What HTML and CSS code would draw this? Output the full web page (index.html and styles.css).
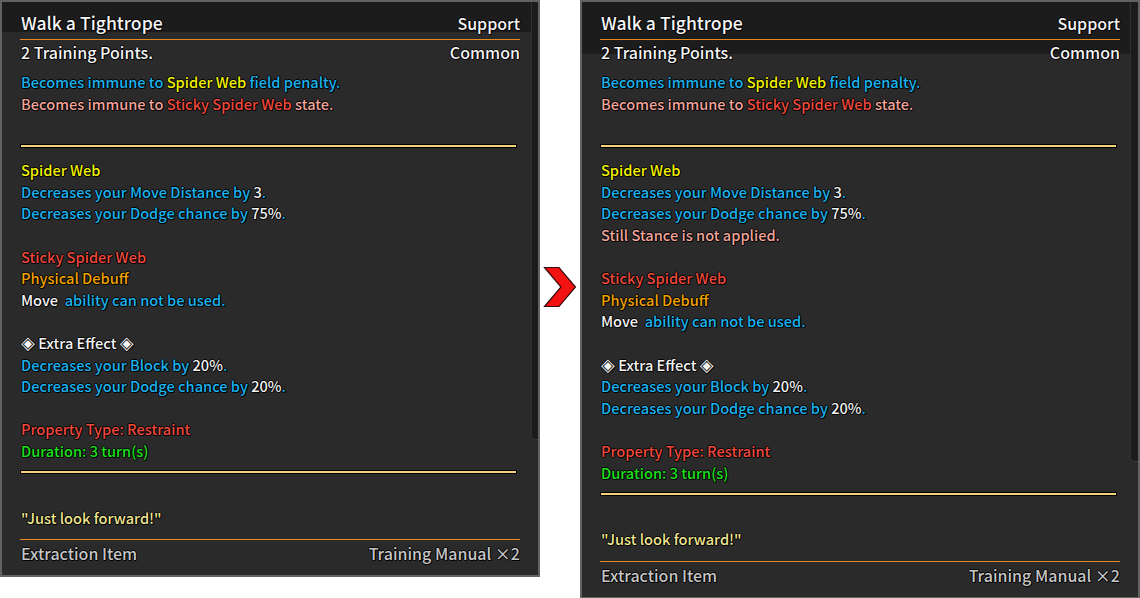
FILE: index.html
```html
<!DOCTYPE html>
<html lang="en">
<head>
    <meta charset="UTF-8">
    <title>Walk a Tightrope</title>
    <link rel="stylesheet" href="styles.css">
</head>
<body>
    <div class="compare">
        <!-- before -->
        <div class="tip tip-old">
            <div class="scroll"></div>
            <div class="head">
                <span class="name">Walk a Tightrope</span>
                <span class="kind">Support</span>
            </div>
            <div class="sub">
                <span>2 Training Points.</span>
                <span>Common</span>
            </div>
            <div class="body">
                <div class="ln blue">Becomes immune to <span class="yellow">Spider Web</span> field penalty.</div>
                <div class="ln pink">Becomes immune to <span class="red">Sticky Spider Web</span> state.</div>
                <div class="ln"></div>
                <div class="rule"></div>
                <div class="ln yellow">Spider Web</div>
                <div class="ln blue">Decreases your Move Distance by <span class="white">3</span>.</div>
                <div class="ln blue">Decreases your Dodge chance by <span class="white">75%</span>.</div>
                <div class="ln"></div>
                <div class="ln red">Sticky Spider Web</div>
                <div class="ln orange">Physical Debuff</div>
                <div class="ln blue"><span class="white">Move</span>&nbsp; ability can not be used.</div>
                <div class="ln"></div>
                <div class="ln white"><span class="dia">◈</span> Extra Effect <span class="dia">◈</span></div>
                <div class="ln blue">Decreases your Block by <span class="white">20%</span>.</div>
                <div class="ln blue">Decreases your Dodge chance by <span class="white">20%</span>.</div>
                <div class="ln"></div>
                <div class="ln red">Property Type: Restraint</div>
                <div class="ln green">Duration: 3 turn(s)</div>
                <div class="rule"></div>
                <div class="ln"></div>
                <div class="ln quote">"Just look forward!"</div>
            </div>
            <div class="foot">
                <span>Extraction Item</span>
                <span>Training Manual ×2</span>
            </div>
        </div>

        <div class="arrow">
            <svg width="34" height="42" viewBox="0 0 34 42">
                <polygon points="1.5,1.5 16,1.5 32.5,21 16,40.5 1.5,40.5 18,21" fill="#f21212" stroke="#3a0a0a" stroke-width="1.2"/>
            </svg>
        </div>

        <!-- after -->
        <div class="tip tip-new">
            <div class="scroll"></div>
            <div class="head">
                <span class="name">Walk a Tightrope</span>
                <span class="kind">Support</span>
            </div>
            <div class="sub">
                <span>2 Training Points.</span>
                <span>Common</span>
            </div>
            <div class="body">
                <div class="ln blue">Becomes immune to <span class="yellow">Spider Web</span> field penalty.</div>
                <div class="ln pink">Becomes immune to <span class="red">Sticky Spider Web</span> state.</div>
                <div class="ln"></div>
                <div class="rule"></div>
                <div class="ln yellow">Spider Web</div>
                <div class="ln blue">Decreases your Move Distance by <span class="white">3</span>.</div>
                <div class="ln blue">Decreases your Dodge chance by <span class="white">75%</span>.</div>
                <div class="ln pink">Still Stance is not applied.</div>
                <div class="ln"></div>
                <div class="ln red">Sticky Spider Web</div>
                <div class="ln orange">Physical Debuff</div>
                <div class="ln blue"><span class="white">Move</span>&nbsp; ability can not be used.</div>
                <div class="ln"></div>
                <div class="ln white"><span class="dia">◈</span> Extra Effect <span class="dia">◈</span></div>
                <div class="ln blue">Decreases your Block by <span class="white">20%</span>.</div>
                <div class="ln blue">Decreases your Dodge chance by <span class="white">20%</span>.</div>
                <div class="ln"></div>
                <div class="ln red">Property Type: Restraint</div>
                <div class="ln green">Duration: 3 turn(s)</div>
                <div class="rule"></div>
                <div class="ln"></div>
                <div class="ln quote">"Just look forward!"</div>
            </div>
            <div class="foot">
                <span>Extraction Item</span>
                <span>Training Manual ×2</span>
            </div>
        </div>
    </div>
</body>
</html>
```

FILE: styles.css
```css
*{
    margin: 0;
    padding: 0;
    box-sizing: border-box;
}
body{
    background: #fff;
    overflow: hidden;
    font-family: "Noto Sans CJK JP", "Noto Sans", sans-serif;
    font-weight: 500;
}
.compare{
    display: flex;
    align-items: flex-start;
}

.tip{
    position: relative;
    border: 2px solid #626262;
    padding: 0 18px;
    background: linear-gradient(#1c1c1c 0 30px, #2a2a2a 30px);
    color: #f4f4f4;
    text-shadow: -1px 0 rgba(0,0,0,.9), 1px 0 rgba(0,0,0,.9), 0 -1px rgba(0,0,0,.9), 0 1px rgba(0,0,0,.9), 1px 1px rgba(0,0,0,.6);
}
.tip-old{
    width: 540px;
}
.tip-new{
    width: 560px;
    background: linear-gradient(#1c1c1c 0 52px, #2a2a2a 52px);
}

/* scrollbar track on the right edge */
.scroll{
    position: absolute;
    top: 0;
    right: 0;
    width: 7px;
    height: 438px;
    background: #1b1b1b;
    border-left: 1px solid #303030;
    border-bottom: 1px solid #3a3a3a;
    border-bottom-left-radius: 5px;
}
.tip-new .scroll{
    width: 8px;
    height: 460px;
}

.head{
    display: flex;
    justify-content: space-between;
    align-items: baseline;
    padding: 6px 0 1px;
    line-height: 29px;
    border-bottom: 1px solid #e58a1f;
}
.head .name{
    font-size: 17.6px;
    padding-left: 1px;
}
.head .kind{
    font-size: 16px;
}
.sub{
    display: flex;
    justify-content: space-between;
    font-size: 16px;
    line-height: 25px;
    padding: 0 0 6px 1px;
}

.body{
    padding-left: 1px;
    font-size: 14.6px;
}
.ln{
    height: 21.6px;
    line-height: 21.6px;
    white-space: nowrap;
}
.rule{
    height: 2px;
    margin: 9.5px 4px 12px 0;
    background: #f3d27c;
    box-shadow: 0 0 0 1px #000;
}

.blue{ color: #1bb3ee; }
.yellow{ color: #f2f200; }
.pink{ color: #f1a59b; }
.red{ color: #ef4a3d; }
.orange{ color: #f2a300; }
.green{ color: #1ee11e; }
.white{ color: #f4f4f4; }
.quote{
    color: #f1e690;
}
.dia{
    font-family: "DejaVu Sans", sans-serif;
    font-size: 18px;
    line-height: 1;
}

.foot{
    display: flex;
    justify-content: space-between;
    margin-top: 11px;
    border-top: 1px solid #e58a1f;
    font-size: 16px;
    line-height: 26px;
    padding: 0 0 9px 1px;
    color: #c6c6c6;
}

.arrow{
    width: 40px;
    margin-top: 266px;
    display: flex;
    justify-content: center;
}
.arrow svg{
    display: block;
}
```
